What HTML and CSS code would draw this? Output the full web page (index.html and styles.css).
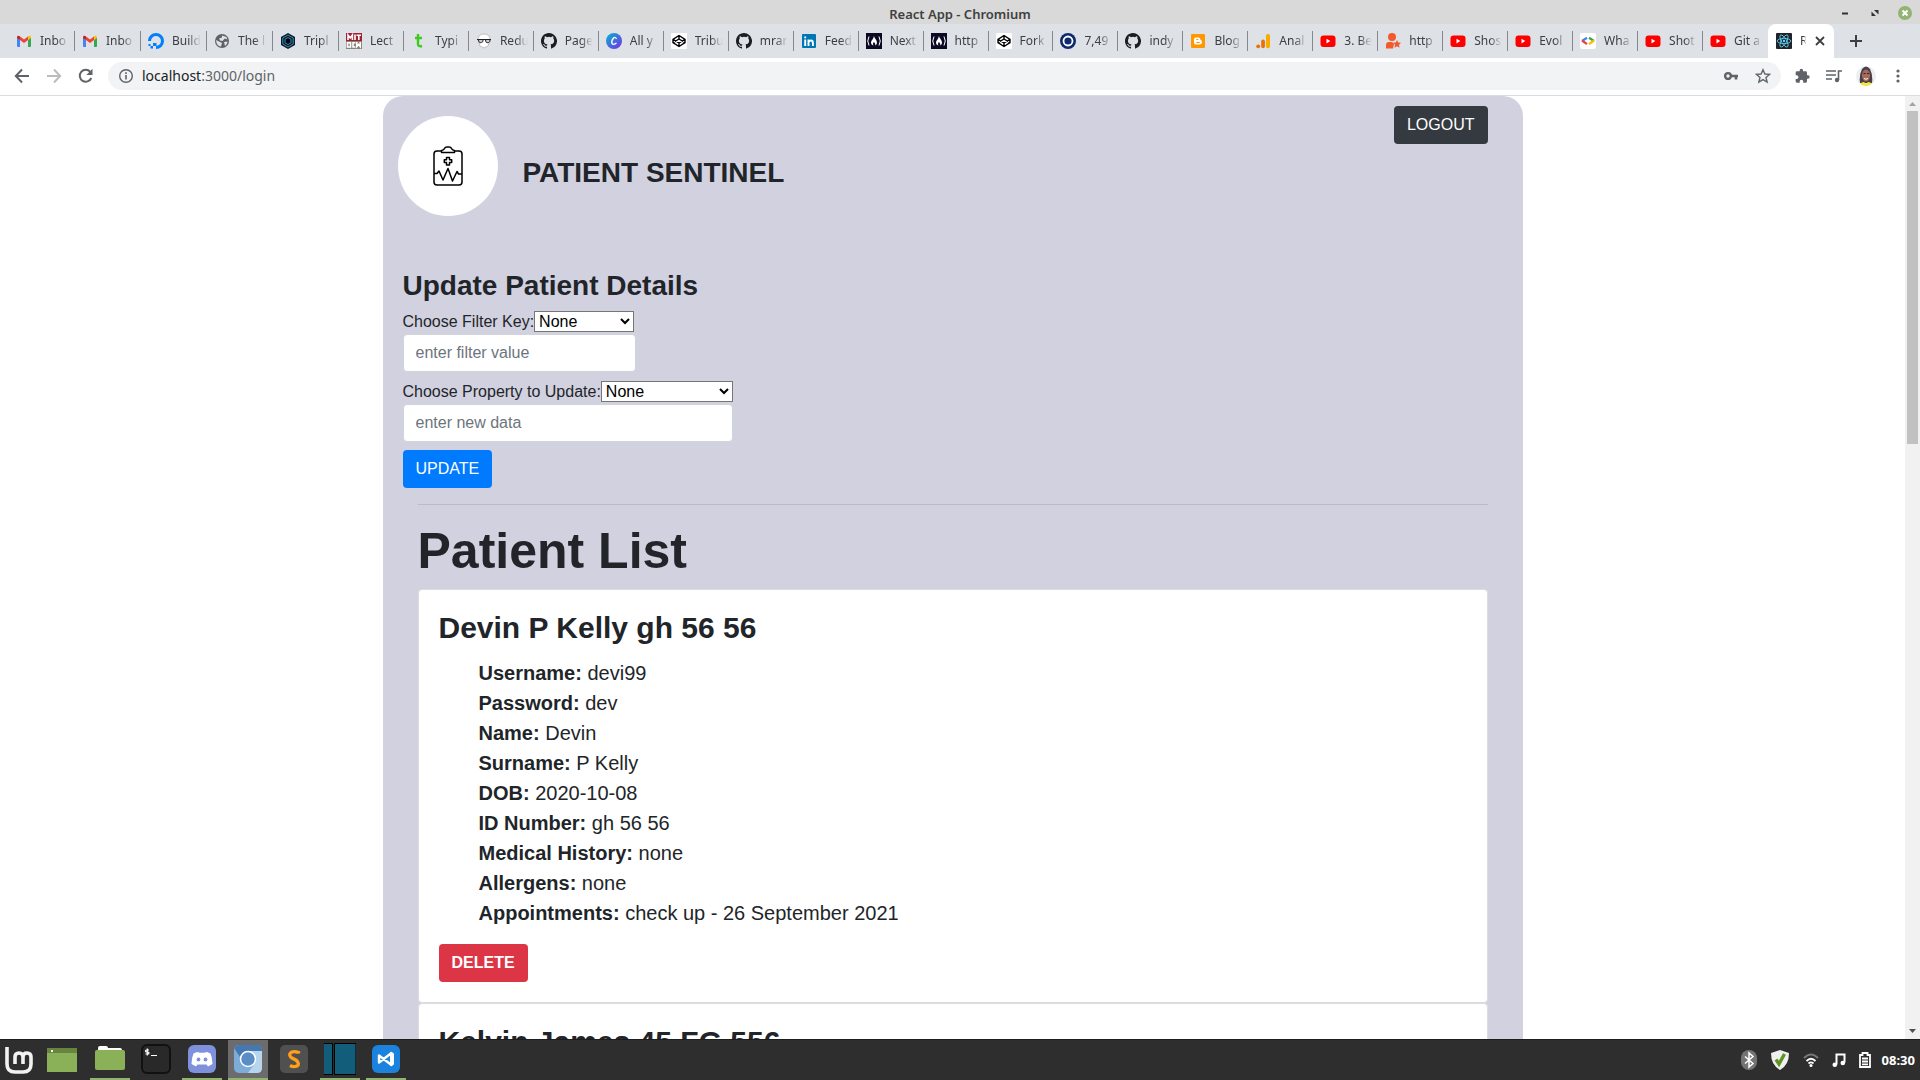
FILE: index.html
```html
<!DOCTYPE html>
<html lang="en">
<head>
<meta charset="utf-8">
<title>React App - Chromium</title>
<link rel="stylesheet" href="styles.css">
</head>
<body>
<svg class="sprites" aria-hidden="true">
  <symbol id="gmail" viewBox="0 0 16 16"><path fill="#4285f4" d="M1 4.5V13q0 1 1 1h2V7z"/><path fill="#34a853" d="M15 4.5V13q0 1-1 1h-2V7z"/><path fill="#ea4335" d="M4 7V3.500l4 3 4-3V7l-4 3z"/><path fill="#c5221f" d="M1 4.500c0-2 1.800-2 3-1V7L1 5z"/><path fill="#fbbc04" d="M15 4.500c0-2-1.800-2-3-1V7l3-2z"/></symbol>
  <symbol id="github" viewBox="0 0 16 16"><path fill="#1b1f23" d="M8 0C3.580 0 0 3.580 0 8c0 3.540 2.290 6.530 5.470 7.590.4.070.55-.17.55-.38 0-.19-.01-.82-.01-1.490-2.010.37-2.530-.49-2.690-.94-.09-.23-.48-.94-.82-1.130-.28-.15-.68-.52-.01-.53.63-.01 1.080.58 1.230.82.72 1.210 1.870.87 2.330.66.07-.52.28-.87.51-1.070-1.780-.2-3.640-.89-3.640-3.950 0-.87.31-1.590.82-2.150-.08-.2-.36-1.020.08-2.120 0 0 .67-.21 2.200.82a7.600 7.600 0 0 1 4 0c1.530-1.040 2.200-.82 2.200-.82.44 1.100.16 1.920.08 2.120.51.56.82 1.270.82 2.150 0 3.070-1.870 3.750-3.650 3.950.29.25.54.73.54 1.480 0 1.070-.01 1.930-.01 2.200 0 .21.15.46.55.38A8 8 0 0 0 8 0z"/></symbol>
  <symbol id="youtube" viewBox="0 0 16 16"><rect x=".5" y="2.500" width="15" height="11.500" rx="3" fill="#f00"/><path fill="#fff" d="M6.500 5.800v4.600l3.800-2.300z"/></symbol>
  <symbol id="codepen" viewBox="0 0 16 16"><rect width="16" height="16" rx="1" fill="#fff"/><path fill="none" stroke="#000" stroke-width="1.400" stroke-linejoin="round" d="M8 2.500l6 3.800v3.400l-6 3.800-6-3.800V6.300zM8 2.500v3.600M8 9.900v3.600M2 6.300l6 3.700 6-3.700M2 9.700L8 6l6 3.700"/></symbol>
  <symbol id="fcc" viewBox="0 0 16 16"><rect width="16" height="16" fill="#0a0a23"/><path fill="none" stroke="#fff" d="M3 3.500Q.5 8 3 12.500M13 3.500q2.500 4.500 0 9"/><path fill="#fff" d="M8 3c0 2 3 4 3 6.500 0 1.500-1 2.500-2 3 .8-1.500 0-2-1-3.500-1 1-1.500 2-.5 3.500-1.500-.5-2.500-1.500-2.500-3C5 7.500 7.500 6 8 3z"/></symbol>
</svg>

<header class="titlebar">
  <span class="titlebar-text">React App - Chromium</span>
  <div class="window-controls">
    <button class="win-btn" aria-label="Minimize"><svg width="14" height="14" viewBox="0 0 14 14"><path d="M4 7.500h6" stroke="#333" stroke-width="2"/></svg></button>
    <button class="win-btn" aria-label="Restore"><svg width="14" height="14" viewBox="0 0 14 14"><path d="M6 4h4.500v4.500zM3.500 5.500V10H8z" fill="#333"/></svg></button>
    <button class="win-btn" aria-label="Close"><svg width="14" height="14" viewBox="0 0 14 14"><circle cx="7" cy="7" r="7" fill="#92b372"/><path d="M4.500 4.500l5 5m0-5l-5 5" stroke="#fff" stroke-width="2"/></svg></button>
  </div>
</header>

<nav class="tabs" aria-label="Tabs">
  <div class="tab-list">
    <a class="tab" href="#"><svg class="fav"><use href="#gmail"/></svg><span>Inbo</span></a>
    <a class="tab" href="#"><svg class="fav"><use href="#gmail"/></svg><span>Inbo</span></a>
    <a class="tab" href="#"><svg class="fav" viewBox="0 0 16 16"><path d="M8 14.500A6.500 6.500 0 1 0 1.500 8" fill="none" stroke="#0080ff" stroke-width="3"/><path fill="#0080ff" d="M5 10h3.500v3H5zM2.500 13H5v2.500H2.500zM.5 11h2v2h-2z"/></svg><span>Build</span></a>
    <a class="tab" href="#"><svg class="fav" viewBox="0 0 16 16"><circle cx="8" cy="8" r="7" fill="#5f6368"/><path fill="#dee1e6" d="M8 2.500l4.500 1.500.8 2.500-2.500-1L8.500 8 6 7.500l-1-2 3-1zM2 7l4 2 2 1-1 3.500Q2.500 13 2 7zM10 9l3.500-.5q0 3-2.500 4.500z"/></svg><span>The l</span></a>
    <a class="tab" href="#"><svg class="fav" viewBox="0 0 16 16"><path fill="#0a1822" d="M8 0l7 4v8l-7 4-7-4V4z"/><path fill="none" stroke="#3492c0" stroke-width="1" d="M8 2l5.200 3v6L8 14l-5.200-3V5z"/><path stroke="#3492c0" d="M8 4.500l3 1.800v3.400l-3 1.800-3-1.800V6.300z"/></svg><span>Tripl</span></a>
    <a class="tab" href="#"><svg class="fav" viewBox="0 0 16 16"><path fill="#a31f34" d="M0 0h16v8H0z"/><path fill="#8a8577" d="M0 8h16v8H0z"/><g fill="none" stroke="#fff" stroke-width="1.600"><path d="M2 7V2l2.200 3L6.400 2v5M9 1.500V7M10.500 2.200H15M12.800 2v5"/><rect x="1.500" y="9.800" width="3" height="4.200"/><path d="M9.500 9.800H7V14h2.500M10.800 9v4.500l1.700-2 1.700 2V9"/></g></svg><span>Lect</span></a>
    <a class="tab" href="#"><svg class="fav" viewBox="0 0 16 16"><path d="M7 1v10q0 3 4 2M4 5h7" fill="none" stroke="#3ec91e" stroke-width="2.400"/></svg><span>Typi</span></a>
    <a class="tab" href="#"><svg class="fav" viewBox="0 0 16 16"><path d="M2 7q0-6 6-6t6 6l-2 6-4 2-4-2z" fill="#fff" stroke="#aaa" stroke-width=".7"/><path d="M1 6.500h14" stroke="#222"/><path d="M2.500 6.500q0 4 3 3 2-.5 1.500-3zm7 0q0 4 3 3 2-.5 1.500-3z" fill="#ccc" stroke="#222"/></svg><span>Redu</span></a>
    <a class="tab" href="#"><svg class="fav"><use href="#github"/></svg><span>Page</span></a>
    <a class="tab" href="#"><svg class="fav" viewBox="0 0 16 16"><defs><linearGradient id="canva" x2="1" y2="1"><stop stop-color="#00b8cc"/><stop offset="1" stop-color="#7d2ae8"/></linearGradient></defs><circle cx="8" cy="8" r="8" fill="url(#canva)"/><path d="M10.500 6Q9.500 3.500 7.500 5 5 8 6 10.500q1.500 2 4.500-.5" fill="none" stroke="#fff" stroke-width="1.300"/></svg><span>All y</span></a>
    <a class="tab" href="#"><svg class="fav"><use href="#codepen"/></svg><span>Tribu</span></a>
    <a class="tab" href="#"><svg class="fav"><use href="#github"/></svg><span>mrar</span></a>
    <a class="tab" href="#"><svg class="fav" viewBox="0 0 16 16"><rect x="1" y="1" width="14" height="14" rx="1" fill="#0077b5"/><path d="M4.200 6.500V13M4.200 3.500v1.800M7.500 13V6.500M7.500 13V9.500Q8 7.500 10 7.500q1.900 0 1.900 2.500v3" fill="none" stroke="#fff" stroke-width="1.900"/></svg><span>Feed</span></a>
    <a class="tab" href="#"><svg class="fav"><use href="#fcc"/></svg><span>Next</span></a>
    <a class="tab" href="#"><svg class="fav"><use href="#fcc"/></svg><span>http</span></a>
    <a class="tab" href="#"><svg class="fav"><use href="#codepen"/></svg><span>Fork</span></a>
    <a class="tab" href="#"><svg class="fav" viewBox="0 0 16 16"><circle cx="8" cy="8" r="8" fill="#0f2a6b"/><circle cx="8" cy="8" r="4.500" fill="#0f2a6b" stroke="#fff" stroke-width="1.800"/></svg><span>7,49</span></a>
    <a class="tab" href="#"><svg class="fav"><use href="#github"/></svg><span>indy</span></a>
    <a class="tab" href="#"><svg class="fav" viewBox="0 0 16 16"><rect x="1" y="1" width="14" height="14" rx="1" fill="#ff9800"/><path d="M6 4.500h2.500q2 0 2 2.500 1.500 0 1.500 2t-2 2.500H6q-2 0-2-2v-3q0-2 2-2z" fill="#fff"/><path d="M6.300 6.500h2M6.300 9.500h3.500" stroke="#ff9800"/></svg><span>Blog</span></a>
    <a class="tab" href="#"><svg class="fav" viewBox="0 0 16 16"><circle cx="3.200" cy="13.300" r="1.900" fill="#e37400"/><rect x="6.200" y="6.500" width="3.700" height="8.700" rx="1.800" fill="#e8710a"/><rect x="11" y="1" width="4" height="14.200" rx="1.900" fill="#f9ab00"/></svg><span>Anal</span></a>
    <a class="tab" href="#"><svg class="fav"><use href="#youtube"/></svg><span>3. Be</span></a>
    <a class="tab" href="#"><svg class="fav" viewBox="0 0 16 16"><path fill="#f4592b" d="M7 0a4 4 0 1 1 0 8 4 4 0 0 1 0-8zM1 15.500V12q0-3 3-3h3l2 2-1 4.500zM12 7l1.200 2.500 2.800.3-2 2 .5 2.900-2.500-1.400-2.500 1.400.5-2.900-2-2 2.800-.3z"/></svg><span>http</span></a>
    <a class="tab" href="#"><svg class="fav"><use href="#youtube"/></svg><span>Shos</span></a>
    <a class="tab" href="#"><svg class="fav"><use href="#youtube"/></svg><span>Evol</span></a>
    <a class="tab" href="#"><svg class="fav" viewBox="0 0 16 16"><rect width="16" height="16" rx="2" fill="#fff"/><g fill="none" stroke-width="2.200"><path d="M7 4.800L2 8" stroke="#4285f4"/><path d="M2 7.500l5 3.700" stroke="#ea4335"/><path d="M9 4.800L14 8" stroke="#34a853"/><path d="M14 7.500l-5 3.700" stroke="#fbbc04"/></g></svg><span>Wha</span></a>
    <a class="tab" href="#"><svg class="fav"><use href="#youtube"/></svg><span>Shot</span></a>
    <a class="tab" href="#"><svg class="fav"><use href="#youtube"/></svg><span>Git a</span></a>
  </div>
  <div class="tab-active">
    <svg class="fav" viewBox="0 0 16 16"><rect width="16" height="16" rx="1" fill="#20232a"/><g fill="none" stroke="#61dafb" stroke-width=".8"><ellipse cx="8" cy="8" rx="6.800" ry="2.600"/><ellipse cx="8" cy="8" rx="6.800" ry="2.600" transform="rotate(60 8 8)"/><ellipse cx="8" cy="8" rx="6.800" ry="2.600" transform="rotate(120 8 8)"/></g><circle cx="8" cy="8" r="1.200" fill="#61dafb"/></svg>
    <span>R</span>
    <button class="tab-close" aria-label="Close tab"><svg width="10" height="10" viewBox="0 0 10 10"><path d="M1 1l8 8m0-8L1 9" stroke="#3c4043" stroke-width="1.800"/></svg></button>
  </div>
  <button class="tab-new" aria-label="New tab"><svg width="12" height="12" viewBox="0 0 12 12"><path d="M6 0v12M0 6h12" stroke="#3c4043" stroke-width="2"/></svg></button>
</nav>

<div class="toolbar">
  <button class="tool" aria-label="Back"><svg width="16" height="16" viewBox="0 0 16 16"><path d="M8 1.500L1.800 8 8 14.500M2 8h13" fill="none" stroke="#5f6368" stroke-width="2"/></svg></button>
  <button class="tool" aria-label="Forward"><svg width="16" height="16" viewBox="0 0 16 16"><path d="M8 1.500L14.200 8 8 14.500M14 8H1" fill="none" stroke="#babcbe" stroke-width="2"/></svg></button>
  <button class="tool" aria-label="Reload"><svg width="16" height="16" viewBox="0 0 16 16"><path d="M13.300 10A6 6 0 1 1 12.300 3.800" fill="none" stroke="#5f6368" stroke-width="2"/><path d="M14.500.8V7H8.300z" fill="#5f6368"/></svg></button>
  <div class="omnibox">
    <svg width="16" height="16" viewBox="0 0 16 16"><circle cx="8" cy="8" r="6.300" fill="none" stroke="#5f6368" stroke-width="1.400"/><path d="M8 7v4.500M8 4.300v1.600" stroke="#5f6368" stroke-width="1.600"/></svg>
    <span class="url"><b>localhost</b>:3000/login</span>
    <button class="tool" aria-label="Saved passwords"><svg width="16" height="16" viewBox="0 0 16 16"><circle cx="5" cy="8" r="2.900" fill="none" stroke="#5f6368" stroke-width="2.400"/><path d="M8 8h7M13 8v3.500" stroke="#5f6368" stroke-width="2.600" fill="none"/></svg></button>
    <button class="tool" aria-label="Bookmark"><svg width="16" height="16" viewBox="0 0 16 16"><path d="M8 1.700l1.900 4.300 4.600.4-3.500 3.100 1.100 4.600L8 11.600l-4.100 2.500L5 9.500 1.500 6.400 6.100 6z" fill="none" stroke="#5f6368" stroke-width="1.400"/></svg></button>
  </div>
  <button class="tool" aria-label="Extensions"><svg width="16" height="16" viewBox="0 0 24 24"><path fill="#5f6368" d="M21 11h-1.500V7a2 2 0 0 0-2-2h-4V3.500a2.500 2.500 0 0 0-5 0V5h-4a2 2 0 0 0-2 2v4H4a2.700 2.700 0 0 1 0 5.400H2.500V20a2 2 0 0 0 2 2h4v-1.500a2.700 2.700 0 0 1 5.400 0V22h3.600a2 2 0 0 0 2-2v-4H21a2.500 2.500 0 0 0 0-5z"/></svg></button>
  <button class="tool" aria-label="Media controls"><svg width="16" height="16" viewBox="0 0 16 16"><path d="M0 3h10M0 7h10M0 11h6M12.500 12V3H16" fill="none" stroke="#5f6368" stroke-width="1.600"/><circle cx="11" cy="12" r="2.200" fill="#5f6368"/></svg></button>
  <button class="tool profile" aria-label="Profile"><svg width="20" height="20" viewBox="0 0 20 20"><defs><clipPath id="face"><circle cx="10" cy="10" r="10"/></clipPath></defs><g clip-path="url(#face)"><path fill="#eceef2" d="M0 0h20v20H0z"/><path fill="#4a3d4c" d="M4 17Q3 9 6 3q4-5 8 0 3 6 2 14z"/><ellipse cx="10" cy="9.500" rx="4" ry="6" fill="#a56a58"/><path d="M7.500 7.500h2m1.500 0h2" stroke="#2b2024"/><path d="M8 12.500q2 1.500 4 0" stroke="#fff" fill="none"/><path fill="#f4e733" d="M2 20q3-4 6-4l2 2 2-2q3 0 6 4z"/></g></svg></button>
  <button class="tool" aria-label="Menu"><svg width="16" height="16" viewBox="0 0 16 16" fill="#5f6368"><circle cx="8" cy="3" r="1.600"/><circle cx="8" cy="8" r="1.600"/><circle cx="8" cy="13" r="1.600"/></svg></button>
</div>

<div class="viewport">
  <main class="page">
    <div class="container">
      <header class="brand">
        <div class="logo"><svg width="30" height="40" viewBox="0 0 30 40"><path d="M8.500 5H4Q1 5 1 8v28q0 3 3 3h22q3 0 3-3V8q0-3-3-3h-4.500M8.500 6.500v-2Q11 4 11.500 2.500T14 1h2q2 0 2.500 1.500T21.500 4.500v2zM1 27.500h3L6 25l4 9 5-11.500L19.500 35l4.500-9.500 1.500 2.500H29M13.500 11.500h3v2.200h2.200v2.700h-2.200V19h-3v-2.600h-2.200v-2.700h2.200z" fill="none" stroke="#000" stroke-width="1.500" stroke-linejoin="round"/></svg></div>
        <h3 class="brand-name">PATIENT SENTINEL</h3>
        <button class="btn btn-dark">LOGOUT</button>
      </header>

      <form class="update">
        <h3>Update Patient Details</h3>
        <div class="field">
          <div class="field-row"><label for="key">Choose Filter Key:</label><select id="key" class="select-key"><option>None</option></select></div>
          <input class="text-input" type="text" placeholder="enter filter value" aria-label="Filter value">
        </div>
        <div class="field">
          <div class="field-row"><label for="prop">Choose Property to Update:</label><select id="prop" class="select-prop"><option>None</option></select></div>
          <input class="text-input" type="text" placeholder="enter new data" aria-label="New data">
        </div>
        <button class="btn btn-primary" type="button">UPDATE</button>
      </form>

      <section class="patients">
        <hr>
        <h1>Patient List</h1>
        <article class="card">
          <h2>Devin P Kelly gh 56 56</h2>
          <ul>
            <li><b>Username:</b> devi99</li>
            <li><b>Password:</b> dev</li>
            <li><b>Name:</b> Devin</li>
            <li><b>Surname:</b> P Kelly</li>
            <li><b>DOB:</b> 2020-10-08</li>
            <li><b>ID Number:</b> gh 56 56</li>
            <li><b>Medical History:</b> none</li>
            <li><b>Allergens:</b> none</li>
            <li><b>Appointments:</b> check up - 26 September 2021</li>
          </ul>
          <button class="btn btn-danger">DELETE</button>
        </article>
        <article class="card">
          <h2>Kelvin James 45 FG 556</h2>
        </article>
      </section>
    </div>
  </main>
  <div class="scrollbar" aria-hidden="true">
    <svg width="15" height="15" viewBox="0 0 15 15"><path d="M4 10l3.500-4L11 10z" fill="#a3a3a3"/></svg>
    <div class="track"><div class="thumb"></div></div>
    <svg width="15" height="15" viewBox="0 0 15 15"><path d="M4 5l3.500 4L11 5z" fill="#505050"/></svg>
  </div>
</div>

<footer class="panel">
  <button class="menu-btn" aria-label="Menu"><svg width="28" height="28" viewBox="0 0 28 28"><path d="M2 1v17q0 8 8 8h8q8 0 8-8v-7q0-4-4-4t-4 4v7m0-7q0-4-4-4t-4 4v7" fill="none" stroke="#f2f2f2" stroke-width="3.600"/></svg></button>
  <button class="menu-btn" aria-label="Show desktop"><svg width="30" height="24" viewBox="0 0 30 24"><path fill="#8bb158" d="M0 0h30v24H0z"/><path fill="#68853f" d="M0 0h30v5H0z"/><path fill="#fff" d="M4 2h2v2H4z"/></svg></button>
  <div class="tasks">
    <button class="task open" aria-label="Files"><svg width="30" height="30" viewBox="0 0 30 30"><path fill="#fff" d="M3 6V4q0-2 2-2h6q2 0 2 2h12q2 0 2 2v3H3z"/><rect y="6" width="30" height="20" rx="2" fill="#8bb158"/></svg></button>
    <button class="task" aria-label="Terminal"><svg width="30" height="30" viewBox="0 0 30 30"><rect x="1" y="1" width="28" height="28" rx="5" fill="#292929" stroke="#111" stroke-width="2"/><path d="M8 6H5.500q-1 0-1 1t1 1h1.500q1 0 1 1t-1 1H4.500M6.300 4.500v7M10 11.500h6" fill="none" stroke="#fff" stroke-width="1.200"/></svg></button>
    <button class="task open" aria-label="Discord"><svg width="30" height="30" viewBox="0 0 30 30"><rect x="1" y="1" width="28" height="28" rx="6" fill="#7f90dc"/><path fill="#fff" d="M10 8l3 .7h4L20 8l3.500 1.500Q25.500 14 25.500 20L21 22.500 19.500 20.500h-9L9 22.500 4.500 20q0-6 2-10.500z"/><circle cx="11.500" cy="15.500" r="1.900" fill="#7f90dc"/><circle cx="18.500" cy="15.500" r="1.900" fill="#7f90dc"/></svg></button>
    <button class="task open current" aria-label="Chromium"><svg width="30" height="30" viewBox="0 0 30 30"><rect x="1" y="1" width="28" height="28" rx="5" fill="#7eacd8"/><path fill="#4577b0" d="M6 1h18q5 0 5 5v1H15q-6 0-8 6L1 4q2-3 5-3z"/><path fill="#b8d5ee" d="M15 7h14v17q0 5-5 5h-9l7-10Q25 11 15 7z"/><circle cx="15" cy="15" r="7.500" fill="#5a8cc6" stroke="#fff" stroke-width="1.500"/></svg></button>
    <button class="task" aria-label="Sublime Text"><svg width="30" height="30" viewBox="0 0 30 30"><rect x="1" y="1" width="28" height="28" rx="5" fill="#505050"/><path d="M19.500 9.500v-1q-4-1.500-6.500-.5-4 2-1 5.500l5.500 3q3.500 3.500.5 5.500-3.500 1.500-7-.5" fill="none" stroke="#ff9f1a" stroke-width="3.400"/></svg></button>
    <button class="task open" aria-label="Workspace"><svg width="32" height="32" viewBox="0 0 32 32"><path fill="#125e7a" stroke="#000" d="M0 .5h8.500v31H0M10.500.5H32v31H10.500z"/></svg></button>
    <button class="task open" aria-label="Visual Studio Code"><svg width="30" height="30" viewBox="0 0 30 30"><rect x="1" y="1" width="28" height="28" rx="6" fill="#1b83dd"/><path fill="none" stroke="#fff" stroke-width="2.400" stroke-linejoin="round" d="M20.500 9v12L8 11.500v7z"/><path fill="#fff" d="M19 8l4 1.500v11L19 22z"/></svg></button>
  </div>
  <div class="tray">
    <svg width="16" height="20" viewBox="0 0 16 20"><rect width="16" height="20" rx="8" fill="#747474"/><path d="M4 6.500l8 7L8 17V3l4 3.500-8 7" fill="none" stroke="#fff" stroke-width="1.500"/></svg>
    <svg width="20" height="20" viewBox="0 0 20 20"><path fill="#f0f0f0" d="M10 0l9 3q0 12-9 17Q1 15 1 3z"/><path d="M6 9.500l3 4.500 5.500-10" fill="none" stroke="#5f9420" stroke-width="3.400"/></svg>
    <svg width="16" height="14" viewBox="0 0 16 14"><path d="M1 5q7-7 14 0" fill="none" stroke="#777" stroke-width="2"/><path d="M3.500 8q4.500-4.500 9 0M5.500 10.500q2.500-2.300 5 0" fill="none" stroke="#fff" stroke-width="1.800"/><circle cx="8" cy="12.500" r="1.500" fill="#fff"/></svg>
    <svg width="14" height="14" viewBox="0 0 14 14"><path d="M4.500 11.500V1.500h8v8" fill="none" stroke="#fff" stroke-width="2"/><circle cx="2.800" cy="11.700" r="2.300" fill="#fff"/><circle cx="10.800" cy="10" r="2.300" fill="#fff"/></svg>
    <svg width="12" height="16" viewBox="0 0 12 16"><path d="M1 3h2.500V1h5v2H11v12H1zM3 6.500h6M3 9.500h6M3 12.300h6" fill="none" stroke="#fff" stroke-width="1.800"/></svg>
    <time>08:30</time>
  </div>
</footer>
</body>
</html>
```
FILE: styles.css
```css
* { box-sizing: border-box; }

body {
  margin: 0;
  height: 100vh;
  display: flex;
  flex-direction: column;
  overflow: hidden;
  background: #fff;
  color: #212529;
  font: 16px/24px "Liberation Sans", Arial, sans-serif;
}

button { font: inherit; border: 0; padding: 0; background: none; }
svg { display: block; flex: none; }
h1, h2, h3, ul { margin: 0; }
.sprites { display: none; }

/* Window frame */
.titlebar, .tabs, .toolbar, .panel { font-family: "Noto Sans", sans-serif; flex: none; }

.titlebar {
  display: grid;
  grid-template-columns: 1fr auto 1fr;
  align-items: center;
  height: 24px;
  padding: 0 8px;
  background: #d9d9d9;
}
.titlebar-text { grid-column: 2; padding-top: 2px; color: #404040; font-size: 13px; font-weight: 600; }
.window-controls { display: flex; justify-content: flex-end; gap: 16px; }

.tabs { display: flex; height: 34px; background: #dee1e6; padding-left: 9px; font-size: 12px; color: #3c4043; }
.tab-list { display: flex; width: 1759px; min-width: 0; }
.tab {
  display: flex;
  flex: 1 1 0;
  min-width: 0;
  align-items: center;
  gap: 8px;
  height: 20px;
  margin-top: 7px;
  padding: 0 2px 0 7px;
  border-right: 1px solid #85888c;
  color: inherit;
  text-decoration: none;
}
.tab:nth-child(-n + 5) { flex: 0 1 66px; }
.tab:last-child { border-right-color: transparent; }
.fav { width: 16px; height: 16px; }
.tab span, .tab-active span {
  flex: 1;
  white-space: nowrap;
  -webkit-mask-image: linear-gradient(90deg, #000 50%, transparent 90%);
  mask-image: linear-gradient(90deg, #000 50%, transparent 90%);
}
.tab-active {
  display: flex;
  flex: none;
  align-items: center;
  gap: 8px;
  width: 66px;
  padding: 0 11px 0 8px;
  border-radius: 8px 8px 0 0;
  background: #fff;
}
.tab-new { margin-left: 16px; }

.toolbar {
  display: flex;
  align-items: center;
  gap: 16px;
  height: 38px;
  padding: 0 14px 1px;
  background: #fff;
  border-bottom: 1px solid #dadce0;
}
.profile { margin: 0 -2px; }
.omnibox {
  display: flex;
  flex: 1;
  align-items: center;
  gap: 16px;
  height: 28px;
  margin: 0 -3px 0 -2px;
  padding: 0 10px;
  border-radius: 14px;
  background: #f1f3f4;
}
.url { flex: 1; margin-left: -8px; font-size: 14px; color: #5f6368; }
.url b { font-weight: 400; color: #202124; }

/* Web page */
.viewport { display: flex; flex: 1; min-height: 0; }
.page { flex: 1; overflow: hidden; }
.container { max-width: 1140px; margin: 0 auto; min-height: 100%; border-radius: 20px 20px 0 0; background: #d2d1df; }

.brand { display: flex; align-items: center; padding: 10px 35px 0 15px; margin-bottom: 53px; }
.logo {
  display: flex;
  align-items: center;
  justify-content: center;
  width: 100px;
  height: 100px;
  margin: 10px 25px 0 0;
  border-radius: 50%;
  background: #fff;
}
.brand-name { padding-top: 24px; }
.brand .btn { margin-left: auto; align-self: flex-start; }
h3 { font-size: 28px; line-height: 34px; }

.btn { height: 38px; padding: 0 13px; border-radius: 4px; color: #fff; }
.btn-dark { background: #343a40; }
.btn-primary { background: #007bff; }
.btn-danger { background: #dc3545; font-weight: 700; }

.update { padding: 0 20px; }
.update h3 { margin-bottom: 7px; }
.field { display: flex; flex-direction: column; width: fit-content; margin-bottom: 8px; }
.field-row { display: flex; align-items: center; height: 24px; }
.field select {
  height: 21px;
  margin-bottom: 1px;
  padding: 0;
  border: 1px solid #767676;
  border-radius: 0;
  background-color: #fff;
  color: #000;
  font: inherit;
  line-height: 19px;
}
.select-key { width: 100px; }
.select-prop { width: 132px; }
.text-input {
  width: 100%;
  height: 38px;
  padding: 0 12px;
  border: 1px solid #ced4da;
  border-radius: 4px;
  background: #fff;
  font: inherit;
}
.text-input::placeholder { color: #6c757d; }

.patients { padding: 0 35px; }
hr { margin: 16px 0; border: 0; border-top: 1px solid rgba(0, 0, 0, 0.1); }
h1 { margin-bottom: 8px; font-size: 50px; line-height: 60px; }
.card { padding: 20px; border: 1px solid #dcdce0; border-radius: 4px; background: #fff; }
.card h2 { margin-bottom: 12px; font-size: 30px; line-height: 36px; }
.card ul { margin-bottom: 16px; padding-left: 40px; list-style: none; font-size: 20px; line-height: 30px; }

.scrollbar { display: flex; flex-direction: column; width: 15px; background: #f1f1f1; }
.track { flex: 1; padding: 0 2px; }
.thumb { height: 36.5%; background: #c1c1c1; }

/* Desktop panel */
.panel { display: flex; height: 41px; padding-left: 5px; border-top: 1px solid #1c1c1c; background: #2e2e2e; }
.menu-btn { display: flex; align-items: center; margin-right: 14px; }
.menu-btn + .menu-btn { margin-right: 13px; }
.tasks { display: flex; gap: 6px; }
.task { display: flex; align-items: center; justify-content: center; width: 40px; border-bottom: 2px solid transparent; }
.open { border-bottom-color: #92b372; }
.current { background: #6c6c6c; }
.tray { display: flex; align-items: center; gap: 13px; margin-left: auto; padding-right: 5px; }
.tray time { margin-left: -2px; color: #fff; font-size: 13px; font-weight: 700; }
```
